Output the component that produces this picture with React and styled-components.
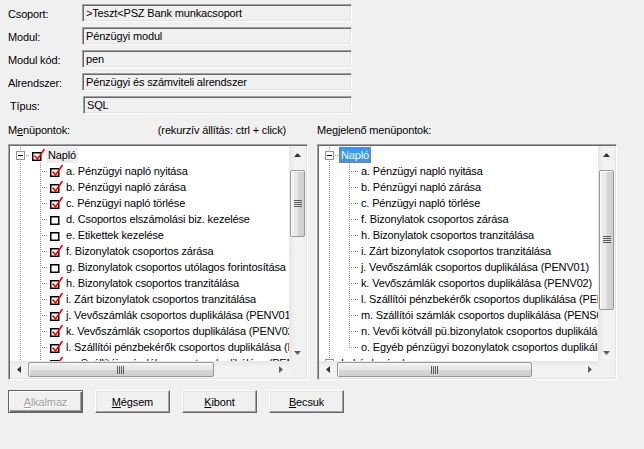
import React from 'react';
import styled, { createGlobalStyle, css } from 'styled-components';

const Global = createGlobalStyle`
  html, body { margin: 0; padding: 0; background: #f0f0f0; }
  body {
    font-family: "Liberation Sans", Arial, sans-serif;
    font-size: 11px;
    letter-spacing: -0.15px;
    color: #000;
  }
  #root { width: 644px; height: 449px; }
`;

const Page = styled.div`
  width: 644px;
  height: 449px;
  box-sizing: border-box;
  padding: 4px 0 0 8px;
  background: #f0f0f0;
  display: flex;
  flex-direction: column;
  overflow: hidden;
`;

const Form = styled.div`
  display: grid;
  grid-template-columns: 74px 270px;
  grid-auto-rows: 18px;
  row-gap: 5px;
  align-items: center;
`;

const Label = styled.div`
  padding-left: ${p => p.$indent || 0}px;
  padding-top: 2px;
  line-height: 13px;
  white-space: nowrap;
`;

const Field = styled.div`
  height: 18px;
  box-sizing: border-box;
  border: 1px solid;
  border-color: #a0a0a0 #fff #fff #a0a0a0;
  box-shadow: inset 1px 1px #696969, inset -1px -1px #e3e3e3;
  padding: 2px 0 0 3px;
  line-height: 13px;
  white-space: nowrap;
  overflow: hidden;
  margin-left: ${p => p.$shift || 0}px;
`;

const Panels = styled.div`
  display: grid;
  grid-template-columns: 300px 300px;
  column-gap: 9px;
  margin-top: 10px;
`;

const Caption = styled.div`
  display: flex;
  justify-content: space-between;
  line-height: 13px;
  height: 13px;
  padding-right: ${p => p.$pr || 0}px;
  margin-bottom: 7px;
  white-space: nowrap;
`;

const Hint = styled.span``;

const TreeBox = styled.div`
  width: 300px;
  height: 236px;
  box-sizing: border-box;
  border: 1px solid;
  border-color: #a0a0a0 #fff #fff #a0a0a0;
  box-shadow: inset 1px 1px #696969, inset -1px -1px #e3e3e3;
  padding: 1px;
  background: #fff;
  display: grid;
  grid-template-columns: 279px 17px;
  grid-template-rows: 215px 17px;
`;

const TreeArea = styled.div`
  background: #fff;
  overflow: hidden;
  padding-top: 1px;
  min-width: 0;
`;

const Row = styled.div`
  display: flex;
  align-items: center;
  height: 16px;
  white-space: nowrap;
`;

const DOT = '#8f8f8f';
const vLine = h =>
  `repeating-linear-gradient(to bottom, ${DOT} 0 1px, transparent 1px 2px) 10px 0 / 1px ${h}px no-repeat`;
const hLine = (from, to) =>
  `repeating-linear-gradient(to right, ${DOT} 0 1px, transparent 1px 2px) ${from}px 8px / ${to - from}px 1px no-repeat`;

const Cell = styled.span`
  flex: 0 0 ${p => p.$w || 20}px;
  height: 16px;
  display: flex;
  align-items: center;
  padding-left: ${p => p.$pl || 0}px;
  box-sizing: border-box;
  background: ${p => {
    const parts = [];
    if (p.$v === 'full') parts.push(vLine(16));
    if (p.$v === 'top') parts.push(vLine(9));
    if (p.$h) parts.push(hLine(p.$h[0], p.$h[1]));
    return parts.length ? parts.join(', ') : 'transparent';
  }};
`;

const Expander = styled.span`
  width: 9px;
  height: 9px;
  box-sizing: border-box;
  border: 1px solid #919191;
  background: #fff;
  display: flex;
  align-items: center;
  justify-content: center;
  svg { display: block; }
`;

const Text = styled.span`
  display: inline-block;
  height: 16px;
  line-height: 16px;
  padding: 0 2px;
  box-sizing: border-box;
  ${p => p.$sel === 'hover' && css`background: #ededed;`}
  ${p => p.$sel === 'focus' && css`
    background: #3399ff;
    color: #fff;
    outline: 1px dotted #c06a20;
    outline-offset: -1px;
  `}
`;

const CheckCell = styled.span`
  flex: 0 0 16px;
  height: 16px;
  svg { display: block; }
`;

const ScrollV = styled.div`
  display: flex;
  flex-direction: column;
  background: linear-gradient(to right, #e6e6e6, #f3f3f3 40%, #f0f0f0);
`;

const ScrollH = styled.div`
  display: flex;
  background: linear-gradient(to bottom, #e6e6e6, #f3f3f3 40%, #f0f0f0);
`;

const ArrowBtn = styled.div`
  flex: 0 0 17px;
  width: 17px;
  height: 17px;
  display: flex;
  align-items: center;
  justify-content: center;
  svg { display: block; }
`;

const Track = styled.div`
  flex: 1;
  display: flex;
  flex-direction: ${p => (p.$vertical ? 'column' : 'row')};
  min-width: 0;
  min-height: 0;
`;

const Thumb = styled.div`
  box-sizing: border-box;
  border: 1px solid #979797;
  border-radius: 2px;
  display: flex;
  align-items: center;
  justify-content: center;
  box-shadow: inset 1px 1px #fbfbfb;
  ${p =>
    p.$vertical
      ? css`
          width: 15px;
          margin: ${p.$offset}px 0 0 1px;
          height: ${p.$size}px;
          background: linear-gradient(to right, #f1f1f1, #e6e6e6 50%, #d6d6d6 55%, #cfcfcf);
        `
      : css`
          height: 15px;
          margin: 1px 0 0 ${p.$offset}px;
          width: ${p.$size}px;
          background: linear-gradient(to bottom, #f1f1f1, #e6e6e6 50%, #d6d6d6 55%, #cfcfcf);
        `}
  svg { display: block; }
`;

const Corner = styled.div`
  background: #f0f0f0;
`;

const Buttons = styled.div`
  display: flex;
  gap: 12px;
  margin-top: 10px;
`;

const Btn = styled.button`
  width: 75px;
  height: 23px;
  box-sizing: border-box;
  padding: 0;
  margin: 0;
  font: inherit;
  letter-spacing: inherit;
  background: #f0f0f0;
  color: #000;
  border: 1px solid;
  border-color: #fff #696969 #696969 #fff;
  box-shadow: inset -1px -1px #a0a0a0, inset 1px 1px #e3e3e3;
  ${p =>
    p.$default &&
    css`
      border-color: #646464;
      box-shadow: inset 1px 1px #fff, inset -1px -1px #696969, inset -2px -2px #a0a0a0;
      color: #a0a0a0;
      text-shadow: 1px 1px #fff;
    `}
`;

/* ---------- drawings ---------- */

const Minus = () => (
  <svg width="7" height="7" viewBox="0 0 7 7">
    <rect x="1" y="3" width="5" height="1" fill="#000" />
  </svg>
);
const Plus = () => (
  <svg width="7" height="7" viewBox="0 0 7 7">
    <rect x="1" y="3" width="5" height="1" fill="#000" />
    <rect x="3" y="1" width="1" height="5" fill="#000" />
  </svg>
);

const CheckBox = ({ on }) => (
  <svg width="16" height="16" viewBox="0 0 16 16">
    <rect x="2.75" y="5.75" width="8" height="7.5" fill="#fff" stroke="#000" strokeWidth="1.5" />
    {on && (
      <polyline
        points="4.5,8.5 7.5,12 14.5,2"
        fill="none"
        stroke="#ff0000"
        strokeWidth="1.6"
        strokeLinejoin="miter"
      />
    )}
  </svg>
);

const Tri = ({ dir }) => {
  const pts = {
    up: '0,4 7,4 3.5,0',
    down: '0,0 7,0 3.5,4',
    left: '4,0 4,7 0,3.5',
    right: '0,0 0,7 4,3.5',
  }[dir];
  const vert = dir === 'up' || dir === 'down';
  return (
    <svg width={vert ? 7 : 4} height={vert ? 4 : 7} viewBox={vert ? '0 0 7 4' : '0 0 4 7'}>
      <polygon points={pts} fill={dir === 'down' || dir === 'right' ? '#606060' : '#303030'} />
    </svg>
  );
};

const Grip = ({ vertical }) =>
  vertical ? (
    <svg width="8" height="8" viewBox="0 0 8 8">
      {[0, 2, 4, 6].map(y => (
        <rect key={y} x="0" y={y} width="8" height="1" fill="#5a5a5a" />
      ))}
    </svg>
  ) : (
    <svg width="8" height="8" viewBox="0 0 8 8">
      {[0, 2, 4, 6].map(x => (
        <rect key={x} x={x} y="0" width="1" height="8" fill="#5a5a5a" />
      ))}
    </svg>
  );

/* ---------- scrollbars ---------- */

const VScroll = ({ offset, size }) => (
  <ScrollV>
    <ArrowBtn><Tri dir="up" /></ArrowBtn>
    <Track $vertical>
      <Thumb $vertical $offset={offset} $size={size}><Grip vertical /></Thumb>
    </Track>
    <ArrowBtn><Tri dir="down" /></ArrowBtn>
  </ScrollV>
);

const HScroll = ({ offset, size }) => (
  <ScrollH>
    <ArrowBtn><Tri dir="left" /></ArrowBtn>
    <Track>
      <Thumb $offset={offset} $size={size}><Grip /></Thumb>
    </Track>
    <ArrowBtn><Tri dir="right" /></ArrowBtn>
  </ScrollH>
);

/* ---------- data ---------- */

const leftItems = [
  ['a. Pénzügyi napló nyitása', true],
  ['b. Pénzügyi napló zárása', true],
  ['c. Pénzügyi napló törlése', true],
  ['d. Csoportos elszámolási biz. kezelése', false],
  ['e. Etikettek kezelése', false],
  ['f. Bizonylatok csoportos zárása', true],
  ['g. Bizonylatok csoportos utólagos forintosítása', false],
  ['h. Bizonylatok csoportos tranzitálása', true],
  ['i. Zárt bizonylatok csoportos tranzitálása', true],
  ['j. Vevőszámlák csoportos duplikálása (PENV01)', true],
  ['k. Vevőszámlák csoportos duplikálása (PENV02)', true],
  ['l. Szállítói pénzbekérők csoportos duplikálása (PENS02)', true],
  ['m. Szállítói számlák csoportos duplikálása (PENS01)', true],
  ['n. Vevői kötváll pü.bizonylatok csoportos duplikálása', true],
];

const rightItems = [
  'a. Pénzügyi napló nyitása',
  'b. Pénzügyi napló zárása',
  'c. Pénzügyi napló törlése',
  'f. Bizonylatok csoportos zárása',
  'h. Bizonylatok csoportos tranzitálása',
  'i. Zárt bizonylatok csoportos tranzitálása',
  'j. Vevőszámlák csoportos duplikálása (PENV01)',
  'k. Vevőszámlák csoportos duplikálása (PENV02)',
  'l. Szállítói pénzbekérők csoportos duplikálása (PENS02)',
  'm. Szállítói számlák csoportos duplikálása (PENS01)',
  'n. Vevői kötváll pü.bizonylatok csoportos duplikálása',
  'o. Egyéb pénzügyi bozonylatok csoportos duplikálása',
];

const fields = [
  ['Csoport:', '>Teszt<PSZ Bank munkacsoport', 0],
  ['Modul:', 'Pénzügyi modul', 0],
  ['Modul kód:', 'pen', 0],
  ['Alrendszer:', 'Pénzügyi és számviteli alrendszer', 0],
  ['Típus:', 'SQL', 2],
];

export default function App() {
  return (
    <>
      <Global />
      <Page>
        <Form>
          {fields.map(([l, v, ind]) => (
            <React.Fragment key={l}>
              <Label $indent={ind}>{l}</Label>
              <Field $shift={ind ? 1 : 0}>{v}</Field>
            </React.Fragment>
          ))}
        </Form>

        <Panels>
          <div>
            <Caption $pr={22}>
              <span>M<u>e</u>nüpontok:</span>
              <Hint>(rekurzív állítás: ctrl + click)</Hint>
            </Caption>
            <TreeBox>
              <TreeArea>
                <Row>
                  <Cell $w={20} $pl={6} $v="full" $h={[14, 20]}>
                    <Expander><Minus /></Expander>
                  </Cell>
                  <CheckCell><CheckBox on /></CheckCell>
                  <Text $sel="hover">Napló</Text>
                </Row>
                {leftItems.map(([t, on]) => (
                  <Row key={t}>
                    <Cell $w={20} $v="full" />
                    <Cell $w={18} $v="full" $h={[10, 18]} />
                    <CheckCell><CheckBox on={on} /></CheckCell>
                    <Text>{t}</Text>
                  </Row>
                ))}
              </TreeArea>
              <VScroll offset={7} size={67} />
              <HScroll offset={1} size={186} />
              <Corner />
            </TreeBox>
          </div>

          <div>
            <Caption>
              <span>Megjelenő menüpontok:</span>
            </Caption>
            <TreeBox>
              <TreeArea>
                <Row>
                  <Cell $w={20} $pl={6} $v="full" $h={[14, 20]}>
                    <Expander><Minus /></Expander>
                  </Cell>
                  <Text $sel="focus">Napló</Text>
                </Row>
                {rightItems.map((t, i) => (
                  <Row key={t}>
                    <Cell $w={20} $v="full" />
                    <Cell
                      $w={20}
                      $v={i === rightItems.length - 1 ? 'top' : 'full'}
                      $h={[10, 20]}
                    />
                    <Text>{t}</Text>
                  </Row>
                ))}
                <Row>
                  <Cell $w={20} $pl={6} $v="top" $h={[14, 20]}>
                    <Expander><Plus /></Expander>
                  </Cell>
                  <Text>Lekérdezések</Text>
                </Row>
              </TreeArea>
              <VScroll offset={7} size={140} />
              <HScroll offset={1} size={195} />
              <Corner />
            </TreeBox>
          </div>
        </Panels>

        <Buttons>
          <Btn $default><u>A</u>lkalmaz</Btn>
          <Btn><u>M</u>égsem</Btn>
          <Btn><u>K</u>ibont</Btn>
          <Btn><u>B</u>ecsuk</Btn>
        </Buttons>
      </Page>
    </>
  );
}
